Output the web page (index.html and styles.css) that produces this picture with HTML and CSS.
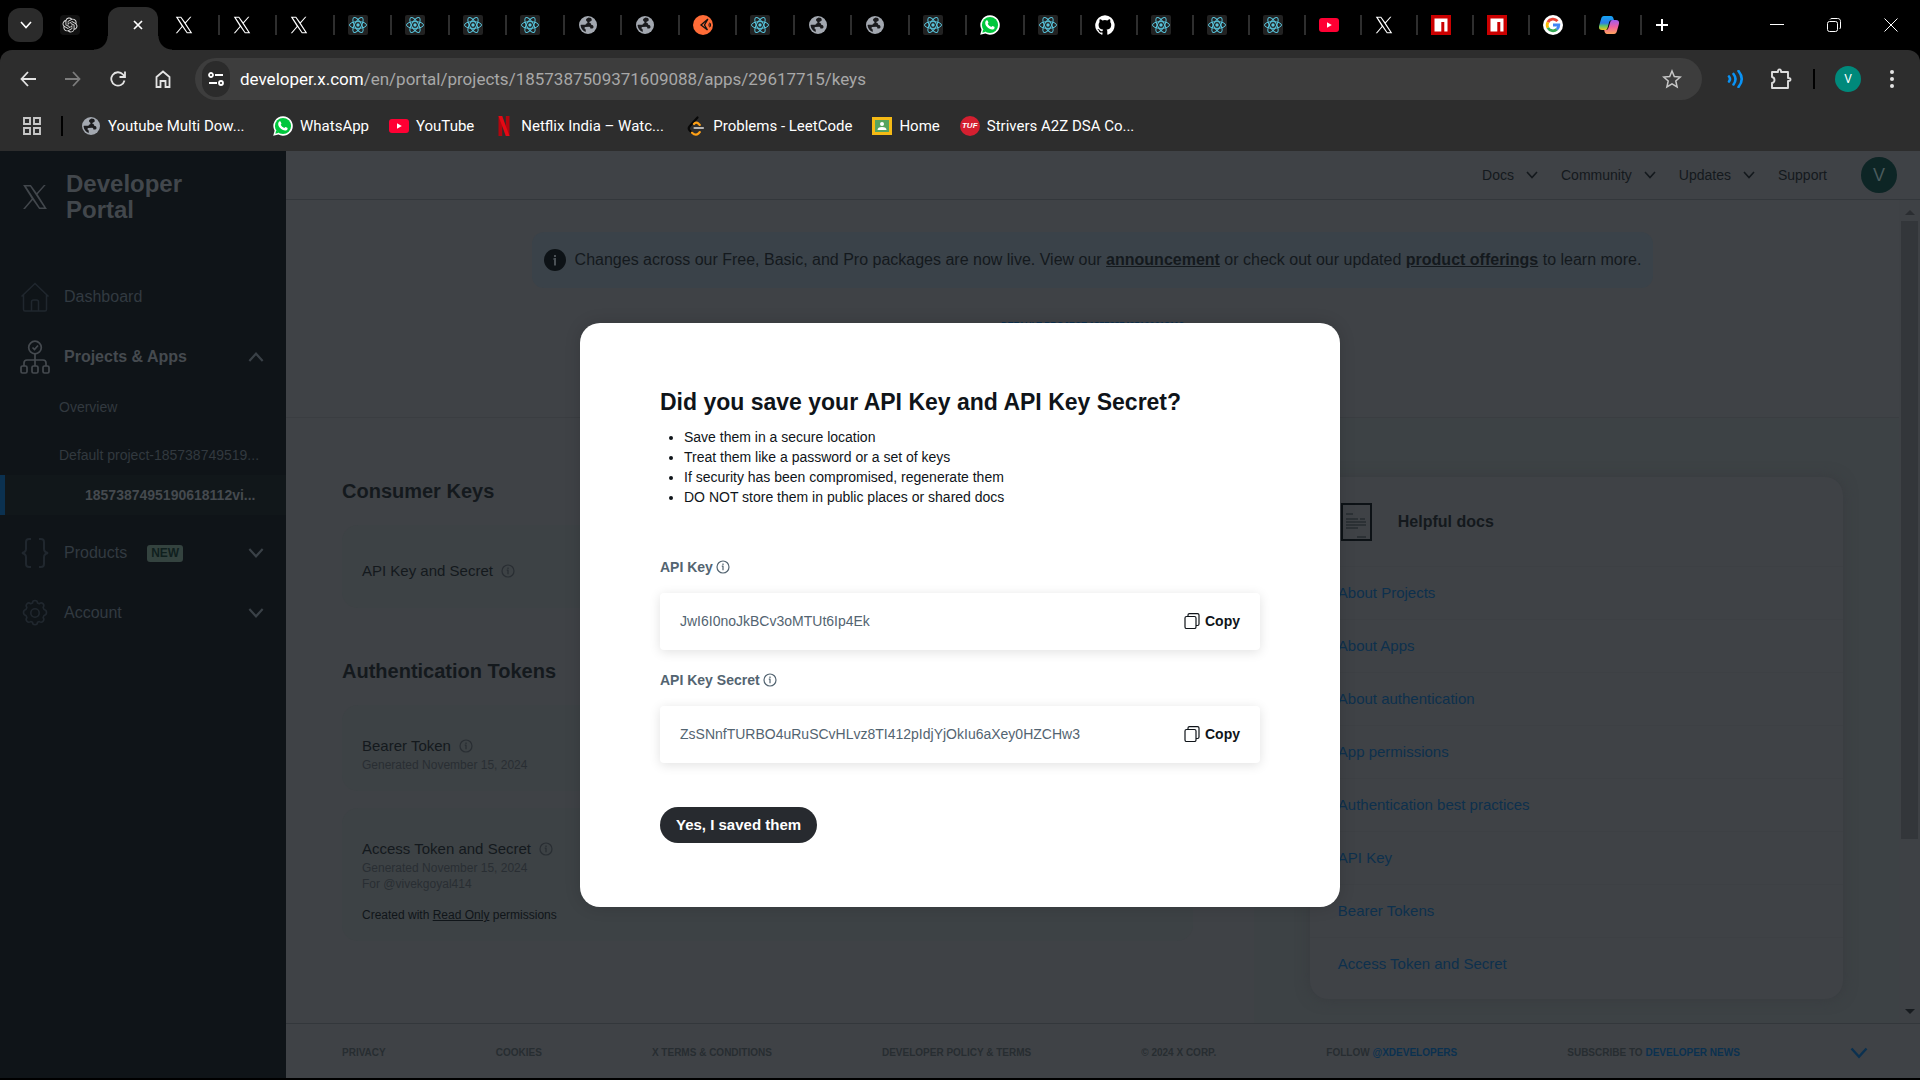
FILE: index.html
```html
<!DOCTYPE html>
<html lang="en">
<head>
<meta charset="utf-8">
<title>Developer Portal</title>
<link rel="stylesheet" href="styles.css">
</head>
<body>
<svg class="sprite" aria-hidden="true">
  <symbol id="x" viewBox="0 0 24 24"><path fill="currentColor" fill-rule="evenodd" d="M1 1h7.2l5.4 7.3L20.200 1h1.700l-7.500 8.500L23 23h-7.200l-5.900-8.200L2.800 23H1l8-9.400zM3.800 2.400 16.500 21.600h3.900L7.500 2.400z"/></symbol>
  <symbol id="react" viewBox="0 0 20 20"><rect width="20" height="20" rx="2" fill="#222"/><circle cx="10" cy="10" r="1.700" fill="#58c4dc"/><g fill="none" stroke="#58c4dc" stroke-width="1"><ellipse cx="10" cy="10" rx="8.500" ry="3.400"/><ellipse cx="10" cy="10" rx="8.500" ry="3.400" transform="rotate(60 10 10)"/><ellipse cx="10" cy="10" rx="8.500" ry="3.400" transform="rotate(120 10 10)"/></g></symbol>
  <symbol id="globe" viewBox="0 0 20 20"><circle cx="10" cy="10" r="9" fill="#a3a8b0"/><path fill="#1b1b1d" d="M10.500 2.500c-1 .8-2.500 1-2.500 2.500s1.500 1.200 1.500 2.500-2 .8-2 2.200H3c-.3 0-.5.4-.4.800.3 3 2.400 5.400 5.100 6.500.1-1.500.3-2.500-.7-3.200-.9-.6-.6-1.500.2-1.900l4-.200c.9 0 1.200.9 1.200 1.800h1.800c1 0 1.300-.8 1.300-1.500 0-1.300-1-2.200-2.300-2.200 0-1.600-1-2-2-2 0-1.700 1.500-1 2.300-2.100.5-.8.200-1.800-.5-2.700z"/></symbol>
  <symbol id="postman" viewBox="0 0 20 20"><circle cx="10" cy="10" r="10" fill="#ff6c37"/><path d="M15 4 8 10l6.500 5M15 4l-3.500 6 3 5" fill="none" stroke="#111" stroke-width="1.300"/><ellipse cx="16.800" cy="10" rx=".8" ry="2" fill="none" stroke="#111"/></symbol>
  <symbol id="whatsapp" viewBox="0 0 20 20"><path d="M10 .3a9.700 9.700 0 0 0-8.400 14.500L.2 19.800l5.200-1.300A9.700 9.700 0 1 0 10 .3z" fill="#fff"/><circle cx="10" cy="10" r="8.100" fill="#00c73c"/><path d="M2.300 17.700l.9-3.400 2.600 2.500z" fill="#00c73c"/><path d="M7 5.300c.4 0 .6.2.8.700l.6 1.500c.2.500-.5 1-.7 1.300.8 1.500 2 2.500 3.500 3.200.5-.3.9-1.200 1.300-1.100l1.800.9c.5.200.4 2-.7 2.500-2 .9-4.800-.5-6.500-2.300C5.400 10.200 4.700 8 5.500 6.400c.3-.6.8-1.100 1.500-1.100z" fill="#fff"/></symbol>
  <symbol id="github" viewBox="0 0 20 20"><path fill="#fff" d="M10 .3a10 10 0 0 0-3.200 19.400c.5.100.7-.2.700-.5v-1.700c-2.800.6-3.400-1.300-3.400-1.300-.4-1.200-1.100-1.500-1.100-1.500-.9-.6.100-.6.100-.6 1 .1 1.500 1 1.500 1 .9 1.600 2.400 1.100 3 .9.100-.7.400-1.100.6-1.400-2.200-.2-4.600-1.100-4.600-4.900 0-1.100.4-2 1-2.700-.1-.2-.4-1.200.1-2.600 0 0 .8-.3 2.700 1a9.500 9.500 0 0 1 5 0c1.900-1.300 2.700-1 2.700-1 .5 1.400.2 2.400.1 2.600.6.700 1 1.600 1 2.700 0 3.800-2.300 4.700-4.600 4.900.4.300.7.900.7 1.900v2.700c0 .3.200.6.700.5A10 10 0 0 0 10 .3z"/></symbol>
  <symbol id="youtube" viewBox="0 0 20 20"><rect y="3" width="20" height="14" rx="3" fill="#ff0033"/><path d="M8 7.200v5.600l4.800-2.800z" fill="#fff"/></symbol>
  <symbol id="npm" viewBox="0 0 20 20"><path fill="#cb0000" d="M0 0h20v20H0z"/><path fill="#fff" d="M3.500 3.500h13v13h-3.200V7h-3v9.500H3.500z"/></symbol>
  <symbol id="google" viewBox="0 0 20 20"><circle cx="10" cy="10" r="10" fill="#fff"/><g fill="none" stroke-width="2.800"><path d="M14.500 6.200A5.900 5.900 0 0 0 4.900 7.200" stroke="#ea4335"/><path d="M4.900 7.200a5.900 5.900 0 0 0 0 5.700" stroke="#fbbc05"/><path d="M4.900 12.900a5.900 5.900 0 0 0 8.900 1.500" stroke="#34a853"/><path d="M13.800 14.400A5.700 5.700 0 0 0 15.800 10H10" stroke="#4285f4"/></g></symbol>
  <symbol id="copilot" viewBox="0 0 20 20"><defs><linearGradient id="ca" x2="0" y2="1"><stop stop-color="#14a5f5"/><stop offset=".5" stop-color="#2c7be5"/><stop offset=".7" stop-color="#5ac46a"/><stop offset="1" stop-color="#f5c518"/></linearGradient><linearGradient id="cb" x2="0" y2="1"><stop stop-color="#a05cf0"/><stop offset=".5" stop-color="#f0609e"/><stop offset="1" stop-color="#ffa45c"/></linearGradient></defs><path fill="url(#ca)" d="M5 1h7c1.500 0 2 1 2.500 2.500l.5 1.800h-2.500c-1.500 0-2 .7-2.400 2L8.500 13c-.5 1.500-1 2-2.500 2H3c-3 0-3.500-2-2.800-4.500l2-7C2.700 2 3.300 1 5 1z"/><path fill="url(#cb)" d="M15 19H8c-1.500 0-2-1-2.500-2.500L5.200 15H7c1.500 0 2-.7 2.400-2l1.800-5.700c.4-1.500 1-2.300 2.500-2.300H17c3 0 3.500 2 2.800 4.500l-2 7C17.300 18 16.700 19 15 19z"/></symbol>
  <symbol id="chev" viewBox="0 0 12 12"><path d="M1 3l5 5.500L11 3" fill="none" stroke="currentColor" stroke-width="1.600"/></symbol>
  <symbol id="info" viewBox="0 0 14 14"><circle cx="7" cy="7" r="6" fill="none" stroke="currentColor" stroke-width="1.200"/><path d="M7 6v4.300M7 3.600V5M5.800 6.200H7.400" stroke="currentColor" stroke-width="1.200"/></symbol>
  <symbol id="copy" viewBox="0 0 16 16"><g fill="none" stroke="currentColor" stroke-width="1.200"><rect x="1" y="3.500" width="11" height="12" rx="1.500"/><path d="M4 3.500V2C4 1 4.600.6 5.500.6h8c.9 0 1.500.5 1.500 1.400v9c0 .9-.6 1.500-1.500 1.500H12"/></g></symbol>
</svg>

<header class="browser">
  <div class="tabstrip">
    <button class="search-tabs" aria-label="Search tabs"><svg width="12" height="12"><use href="#chev"/></svg></button>
    <div class="pinned"><svg width="20" height="20" viewBox="-4 -4 32 32"><rect x="-4" y="-4" width="32" height="32" rx="6" fill="#111"/><path fill="#ddd" d="M22.2819 9.8211a5.9847 5.9847 0 0 0-.5157-4.9108 6.0462 6.0462 0 0 0-6.5098-2.9A6.0651 6.0651 0 0 0 4.9807 4.1818a5.9847 5.9847 0 0 0-3.9977 2.9 6.0462 6.0462 0 0 0 .7427 7.0966 5.98 5.98 0 0 0 .511 4.9107 6.051 6.051 0 0 0 6.5146 2.9001A5.9847 5.9847 0 0 0 13.2599 24a6.0557 6.0557 0 0 0 5.7718-4.2058 5.9894 5.9894 0 0 0 3.9977-2.9001 6.0557 6.0557 0 0 0-.7475-7.0729zm-9.022 12.6081a4.4755 4.4755 0 0 1-2.8764-1.0408l.1419-.0804 4.7783-2.7582a.7948.7948 0 0 0 .3927-.6813v-6.7369l2.02 1.1686a.071.071 0 0 1 .038.052v5.5826a4.504 4.504 0 0 1-4.4945 4.4944zm-9.6607-4.1254a4.4708 4.4708 0 0 1-.5346-3.0137l.142.0852 4.783 2.7582a.7712.7712 0 0 0 .7806 0l5.8428-3.3685v2.3324a.0804.0804 0 0 1-.0332.0615L9.74 19.9502a4.4992 4.4992 0 0 1-6.1408-1.6464zM2.3408 7.8956a4.485 4.485 0 0 1 2.3655-1.9728V11.6a.7664.7664 0 0 0 .3879.6765l5.8144 3.3543-2.0201 1.1685a.0757.0757 0 0 1-.071 0l-4.8303-2.7865A4.504 4.504 0 0 1 2.3408 7.872zm16.5963 3.8558L13.1038 8.364 15.1192 7.2a.0757.0757 0 0 1 .071 0l4.8303 2.7913a4.4944 4.4944 0 0 1-.6765 8.1042v-5.6772a.79.79 0 0 0-.407-.667zm2.0107-3.0231l-.142-.0852-4.7735-2.7818a.7759.7759 0 0 0-.7854 0L9.409 9.2297V6.8974a.0662.0662 0 0 1 .0284-.0615l4.8303-2.7866a4.4992 4.4992 0 0 1 6.6802 4.66zM8.3065 12.863l-2.02-1.1638a.0804.0804 0 0 1-.038-.0567V6.0742a4.4992 4.4992 0 0 1 7.3757-3.4537l-.142.0805L8.704 5.459a.7948.7948 0 0 0-.3927.6813zm1.0976-2.3654l2.602-1.4998 2.6069 1.4998v2.9994l-2.5974 1.4997-2.6067-1.4997Z"/></svg></div>
    <div class="tab-active"><button class="bare" aria-label="Close tab"><svg width="10" height="10" viewBox="0 0 10 10"><path d="M1 1l8 8M9 1L1 9" stroke="#fff" stroke-width="1.700"/></svg></button></div>
    <div class="tabs">
      <span class="tab"><svg class="xi"><use href="#x"/></svg></span>
      <span class="tab"><svg class="xi"><use href="#x"/></svg></span>
      <span class="tab"><svg class="xi"><use href="#x"/></svg></span>
      <span class="tab"><svg><use href="#react"/></svg></span>
      <span class="tab"><svg><use href="#react"/></svg></span>
      <span class="tab"><svg><use href="#react"/></svg></span>
      <span class="tab"><svg><use href="#react"/></svg></span>
      <span class="tab"><svg><use href="#globe"/></svg></span>
      <span class="tab"><svg><use href="#globe"/></svg></span>
      <span class="tab"><svg><use href="#postman"/></svg></span>
      <span class="tab"><svg><use href="#react"/></svg></span>
      <span class="tab"><svg><use href="#globe"/></svg></span>
      <span class="tab"><svg><use href="#globe"/></svg></span>
      <span class="tab"><svg><use href="#react"/></svg></span>
      <span class="tab"><svg><use href="#whatsapp"/></svg></span>
      <span class="tab"><svg><use href="#react"/></svg></span>
      <span class="tab"><svg><use href="#github"/></svg></span>
      <span class="tab"><svg><use href="#react"/></svg></span>
      <span class="tab"><svg><use href="#react"/></svg></span>
      <span class="tab"><svg><use href="#react"/></svg></span>
      <span class="tab"><svg><use href="#youtube"/></svg></span>
      <span class="tab"><svg class="xi"><use href="#x"/></svg></span>
      <span class="tab"><svg><use href="#npm"/></svg></span>
      <span class="tab"><svg><use href="#npm"/></svg></span>
      <span class="tab"><svg><use href="#google"/></svg></span>
      <span class="tab"><svg><use href="#copilot"/></svg></span>
    </div>
    <button class="bare new-tab" aria-label="New tab"><svg width="14" height="14" viewBox="0 0 14 14"><path d="M7 1v12M1 7h12" stroke="#fff" stroke-width="2"/></svg></button>
    <div class="window-controls">
      <button class="bare" aria-label="Minimize"><svg width="14" height="14" viewBox="0 0 14 14"><path d="M0 6.500h14" stroke="#fff"/></svg></button>
      <button class="bare" aria-label="Restore"><svg width="14" height="14" viewBox="0 0 14 14"><g fill="none" stroke="#fff"><rect x=".5" y="3.500" width="10" height="10" rx="2"/><path d="M3 1.500C3.300.8 4 .5 5 .5h5.500c2 0 3 1 3 3V9c0 1-.3 1.700-1 2"/></g></svg></button>
      <button class="bare" aria-label="Close"><svg width="14" height="14" viewBox="0 0 14 14"><path d="M.5.500l13 13M13.500.500l-13 13" stroke="#fff"/></svg></button>
    </div>
  </div>
  <div class="toolbar">
    <button class="bare" aria-label="Back"><svg width="16" height="16" viewBox="0 0 16 16"><path d="M16 8H1.500M8 1L1.500 8 8 15" fill="none" stroke="#e3e3e3" stroke-width="1.800"/></svg></button>
    <button class="bare" aria-label="Forward"><svg width="16" height="16" viewBox="0 0 16 16"><path d="M0 8h14.500M8 1l6.500 7L8 15" fill="none" stroke="#7c7c7c" stroke-width="1.800"/></svg></button>
    <button class="bare" aria-label="Reload"><svg width="16" height="16" viewBox="0 0 16 16"><path d="M14.500 9.500A6.700 6.700 0 1 1 13 3.500l1.500 1.800M15 .5v5.500H9.500" fill="none" stroke="#e3e3e3" stroke-width="1.800"/></svg></button>
    <button class="bare" aria-label="Home"><svg width="16" height="18" viewBox="0 0 16 18"><path d="M1.500 17V7L8 1.500 14.500 7v10h-4v-6h-5v6z" fill="none" stroke="#e3e3e3" stroke-width="1.800"/></svg></button>
    <div class="omnibox">
      <button class="site-info" aria-label="Site information"><svg width="16" height="14" viewBox="0 0 16 14"><g fill="none" stroke="#fff" stroke-width="1.800"><circle cx="3" cy="3" r="2"/><path d="M7 3h8M1 11h8"/><circle cx="13" cy="11" r="2"/></g></svg></button>
      <a class="url" href="#"><span>developer.x.com</span>/en/portal/projects/1857387509371609088/apps/29617715/keys</a>
      <button class="bare" aria-label="Bookmark this tab"><svg width="20" height="20" viewBox="0 0 20 20"><path d="M10 2l2.300 5.500 6 .5-4.500 4 1.300 6-5.100-3.200L4.900 18l1.300-6L1.700 8l6-.5z" fill="none" stroke="#c7c7c7" stroke-width="1.500"/></svg></button>
    </div>
    <button class="bare ext" aria-label="Read aloud"><svg width="18" height="18" viewBox="0 0 18 18"><g fill="none" stroke="#0a93f5" stroke-width="2.600" stroke-linecap="round"><path d="M2 6.500q2 2.500 0 5M6.500 4q4 5 0 10.500M11.500 1q6.500 8 0 16"/></g></svg></button>
    <button class="bare" aria-label="Extensions"><svg width="22" height="22" viewBox="0 0 22 22"><path d="M2 4h6q-.3-2.500 1.500-2.500T11 4h7v6q2.500-.3 2.500 1.500T18 13v7H2v-5q2.500-.5 2.500-3T2 9z" fill="none" stroke="#ddd" stroke-width="1.900" stroke-linejoin="round"/></svg></button>
    <i class="divider"></i>
    <button class="profile" aria-label="Profile">V</button>
    <button class="bare" aria-label="Menu"><svg width="6" height="18" viewBox="0 0 6 18"><g fill="#e3e3e3"><circle cx="3" cy="2" r="2"/><circle cx="3" cy="9" r="2"/><circle cx="3" cy="16" r="2"/></g></svg></button>
  </div>
  <nav class="bookmarks" aria-label="Bookmarks">
    <button class="bare" aria-label="Apps"><svg width="18" height="18" viewBox="0 0 18 18"><path d="M1 1h6v6H1zM11 1h6v6h-6zM1 11h6v6H1zM11 11h6v6h-6z" fill="none" stroke="#c7c7c7" stroke-width="1.900"/></svg></button>
    <i class="divider"></i>
    <a class="bookmark wide" href="#"><svg><use href="#globe"/></svg>Youtube Multi Dow...</a>
    <a class="bookmark" href="#"><svg><use href="#whatsapp"/></svg>WhatsApp</a>
    <a class="bookmark" href="#"><svg><use href="#youtube"/></svg>YouTube</a>
    <a class="bookmark wide" href="#"><svg viewBox="0 0 20 20"><path d="M4.500 0h3.700v20H4.500zM11.800 0h3.700v20h-3.700z" fill="#b1060f"/><path d="M4.500 0h3.700l7.300 20h-3.700z" fill="#e50914"/></svg>Netflix India – Watc...</a>
    <a class="bookmark" href="#"><svg viewBox="0 0 20 20"><g fill="none" stroke-width="2.200" stroke-linecap="round"><path d="M11.500 1.500L3.500 10.500q-1.500 2 0 3.700l2.500 2.500" stroke="#080808"/><path d="M8 8q2-2.500 4.500-.3l1.200 1.200M6 16.700q3.500 3.300 6.300 1l1.500-1.600" stroke="#ffa116"/><path d="M8.500 12h8.500" stroke="#b3b3b3"/></g></svg>Problems - LeetCode</a>
    <a class="bookmark" href="#"><svg viewBox="0 0 20 20"><path fill="#f5ba15" d="M0 1h20v18H0z"/><path fill="#57a45f" d="M3 4h14v12H3z"/><circle cx="10" cy="8" r="2" fill="#fff"/><path fill="#fff" d="M5.500 14q0-3 4.500-3t4.500 3z"/></svg>Home</a>
    <a class="bookmark" href="#"><span class="tuf">TUF</span>Strivers A2Z DSA Co...</a>
  </nav>
</header>

<div class="portal">
  <aside class="sidebar">
    <div class="brand"><svg width="26" height="28"><use href="#x"/></svg><span>Developer<br>Portal</span></div>
    <nav>
      <a class="item" href="#"><svg width="30" height="30" viewBox="0 0 30 30"><g fill="none" stroke="currentColor" stroke-width="1.500"><path d="M1.500 14.500L15 1.500l13.500 13M3.500 12.500v15q0 1.500 1.500 1.500h20q1.500 0 1.500-1.500v-15"/><path d="M11.500 29V20q0-2 2-2h3q2 0 2 2v9"/></g></svg><span>Dashboard</span></a>
      <a class="item open" href="#"><svg width="30" height="34" viewBox="0 0 30 34"><g fill="none" stroke="currentColor" stroke-width="1.700"><circle cx="15" cy="7.500" r="6.300"/><path d="M12.500 7.500l2 2 3.500-4M15 14v12M4 26v-3q0-3 3-3h16q3 0 3 3v3"/><rect x="1" y="26" width="6" height="7" rx="1.500"/><rect x="12" y="26" width="6" height="7" rx="1.500"/><rect x="23" y="26" width="6" height="7" rx="1.500"/></g></svg><span>Projects &amp; Apps</span><svg class="arrow up"><use href="#chev"/></svg></a>
      <a class="sub" href="#">Overview</a>
      <a class="sub project" href="#">Default project-185738749519...</a>
      <a class="sub current" href="#">1857387495190618112vi...</a>
      <a class="item" href="#"><svg width="30" height="30" viewBox="0 0 30 30"><path d="M11 1H9Q6 1 6 4v7q0 3-4 4 4 1 4 4v7q0 3 3 3h2M19 1h2q3 0 3 3v7q0 3 4 4-4 1-4 4v7q0 3-3 3h-2" fill="none" stroke="currentColor" stroke-width="2"/></svg><span>Products</span><b class="new">NEW</b><svg class="arrow"><use href="#chev"/></svg></a>
      <a class="item" href="#"><svg width="30" height="30" viewBox="0 0 30 30"><g fill="none" stroke="currentColor" stroke-width="1.600" stroke-linejoin="round"><circle cx="15" cy="15" r="4.200"/><path d="M12.500 5q0-2.500 2.500-2.500T17.500 5l1.800.8q2-1.700 3.700-.1t.1 3.700l.9 2.100q2.500.5 2.500 3t-2.500 3l-.9 2.100q1.600 2.100-.1 3.800t-3.700.1l-1.800.8q0 2.500-2.500 2.500t-2.500-2.500l-1.800-.8q-2 1.600-3.700-.1t-.1-3.800L6 17.500q-2.500-.5-2.500-3t2.500-3l.9-2.100q-1.600-2 .1-3.700t3.700.1z"/></g></svg><span>Account</span><svg class="arrow"><use href="#chev"/></svg></a>
    </nav>
  </aside>

  <div class="page">
    <header class="topbar">
      <nav>
        <a href="#">Docs<svg><use href="#chev"/></svg></a>
        <a href="#">Community<svg><use href="#chev"/></svg></a>
        <a href="#">Updates<svg><use href="#chev"/></svg></a>
        <a href="#">Support</a>
      </nav>
      <button class="avatar" aria-label="Account">V</button>
    </header>
    <div class="scroller">
      <main>
        <section class="intro">
          <p class="banner"><svg width="22" height="22" viewBox="0 0 22 22"><circle cx="11" cy="11" r="11" fill="#0d1216"/><path d="M11 9v7.500M11 6v2M9.500 10H11" stroke="#4b5156" stroke-width="2"/></svg><span>Changes across our Free, Basic, and Pro packages are now live. View our <a href="#">announcement</a> or check out our updated <a href="#">product offerings</a> to learn more.</span></p>
          <a class="crumb" href="#">DEFAULT PROJECT-1857387495190618112</a>
        </section>
        <div class="columns">
          <section class="keys">
            <h2>Consumer Keys</h2>
            <div class="box single"><h3>API Key and Secret <svg><use href="#info"/></svg></h3></div>
            <h2>Authentication Tokens</h2>
            <div class="box"><h3>Bearer Token <svg><use href="#info"/></svg></h3><p>Generated November 15, 2024</p></div>
            <div class="box"><h3>Access Token and Secret <svg><use href="#info"/></svg></h3><p>Generated November 15, 2024</p><p>For @vivekgoyal414</p><p class="perm">Created with <a href="#">Read Only</a> permissions</p></div>
          </section>
          <aside class="help">
            <div class="card">
              <h2><svg width="31" height="38" viewBox="0 0 31 38"><rect x="1" y="1" width="29" height="36" fill="none" stroke="#0d1216" stroke-width="2"/><path d="M5 11h7M5 16h12M19 16h5M5 19h20M5 22h20M5 25h12M16 34h9" stroke="#272c31" stroke-width="1.300"/></svg>Helpful docs</h2>
              <ul>
                <li><a href="#">About Projects</a></li>
                <li><a href="#">About Apps</a></li>
                <li><a href="#">About authentication</a></li>
                <li><a href="#">App permissions</a></li>
                <li><a href="#">Authentication best practices</a></li>
                <li><a href="#">API Key</a></li>
                <li><a href="#">Bearer Tokens</a></li>
                <li><a href="#">Access Token and Secret</a></li>
              </ul>
            </div>
          </aside>
        </div>
      </main>
      <div class="scrollbar"><i class="up"></i><i class="thumb"></i><i class="down"></i></div>
    </div>
    <footer>
      <a href="#">PRIVACY</a>
      <a href="#">COOKIES</a>
      <a href="#">X TERMS &amp; CONDITIONS</a>
      <a href="#">DEVELOPER POLICY &amp; TERMS</a>
      <span>© 2024 X CORP.</span>
      <span>FOLLOW <a class="blue" href="#">@XDEVELOPERS</a></span>
      <span>SUBSCRIBE TO <a class="blue" href="#">DEVELOPER NEWS</a></span>
      <button class="bare blue" aria-label="Collapse footer"><svg width="18" height="18"><use href="#chev"/></svg></button>
    </footer>
  </div>

  <div class="overlay">
    <div class="modal" role="dialog" aria-labelledby="dlg">
      <h1 id="dlg">Did you save your API Key and API Key Secret?</h1>
      <ul>
        <li>Save them in a secure location</li>
        <li>Treat them like a password or a set of keys</li>
        <li>If security has been compromised, regenerate them</li>
        <li>DO NOT store them in public places or shared docs</li>
      </ul>
      <h2>API Key <svg><use href="#info"/></svg></h2>
      <div class="secret"><span>JwI6I0noJkBCv3oMTUt6Ip4Ek</span><button class="copy"><svg width="16" height="16"><use href="#copy"/></svg>Copy</button></div>
      <h2>API Key Secret <svg><use href="#info"/></svg></h2>
      <div class="secret"><span>ZsSNnfTURBO4uRuSCvHLvz8TI412pIdjYjOkIu6aXey0HZCHw3</span><button class="copy"><svg width="16" height="16"><use href="#copy"/></svg>Copy</button></div>
      <button class="confirm">Yes, I saved them</button>
    </div>
  </div>
</div>
</body>
</html>
```
FILE: styles.css
```css
* { box-sizing: border-box; margin: 0; padding: 0; }
html { background: #000; }
body {
  min-height: 100vh;
  display: flex;
  flex-direction: column;
  padding-bottom: 2px;
  font-family: "Liberation Sans", Arial, sans-serif;
  color: #0f1419;
}
a { color: inherit; text-decoration: none; }
ul { list-style: none; }
svg { display: block; flex: none; }
button { font: inherit; border: 0; cursor: pointer; }
.sprite { position: absolute; width: 0; height: 0; }
.bare { background: none; color: inherit; display: flex; align-items: center; justify-content: center; }

/* Browser window */
.browser { font-family: Roboto, "Open Sans", sans-serif; color: #fff; background: #000; }
.tabstrip { height: 50px; display: flex; align-items: center; background: #000; padding-left: 8px; }
.search-tabs { width: 35px; height: 34px; border-radius: 12px; background: #2b2b2b; color: #fff; display: flex; align-items: center; justify-content: center; }
.pinned { width: 65px; padding-left: 17px; }
.tab-active {
  position: relative;
  align-self: flex-end;
  width: 50px;
  height: 43px;
  padding: 12px 15px 0 0;
  background: #2d2d2d;
  border-radius: 12px 12px 0 0;
  display: flex;
  align-items: flex-start;
  justify-content: flex-end;
}
.tab-active button { height: 12px; }
.tab-active::before, .tab-active::after { content: ""; position: absolute; bottom: 0; width: 14px; height: 14px; }
.tab-active::before { left: -14px; background: radial-gradient(circle at 0 0, #000 13px, #2d2d2d 14px); }
.tab-active::after { right: -14px; background: radial-gradient(circle at 100% 0, #000 13px, #2d2d2d 14px); }
.tabs { display: flex; padding-left: 4px; }
.tab { width: 56px; height: 20px; border-right: 2px solid #2e2e2e; padding-left: 13px; display: flex; align-items: center; }
.tab:nth-child(-n+16) { width: 57px; }
.tab:nth-child(-n+16):nth-child(odd) { width: 58px; }
.tab svg { width: 20px; height: 20px; }
.tab svg.xi { width: 18px; height: 18px; }
.new-tab { margin-left: 13px; }
.window-controls { display: flex; gap: 43px; margin-left: auto; padding-right: 22px; }
.toolbar {
  height: 58px;
  display: flex;
  align-items: center;
  padding: 0 24px 0 20px;
  background: #2d2d2d;
  border-radius: 12px 12px 0 0;
}
.toolbar > .bare { margin-right: 29px; }
.omnibox { flex: 1; height: 42px; border-radius: 21px; background: #3d3d3d; display: flex; align-items: center; padding: 0 20px 0 7px; margin: 0 25px 0 -5px; }
.site-info { width: 28px; height: 36px; border-radius: 18px; background: #2b2b2b; display: flex; align-items: center; justify-content: center; }
.url { flex: 1; padding-left: 10px; font-size: 17px; line-height: 24px; color: #a8a8a8; }
.url span { color: #fff; }
.toolbar .ext { margin-right: 25px; }
.divider { width: 2px; height: 20px; background: #000; }
.toolbar .divider { margin: 0 20px 0 -8px; }
.toolbar .profile { width: 26px; height: 26px; border-radius: 50%; background: #00897b; color: #fff; font-size: 12px; margin-right: 28px; }
.toolbar > .bare:last-child { margin-right: 1px; }
.bookmarks { height: 43px; background: #2d2d2d; display: flex; align-items: center; padding: 0 23px 8px; }
.bookmarks .divider { margin: 0 18px 0 20px; }
.bookmark { display: flex; align-items: center; gap: 7px; margin-right: 20px; font-size: 15px; line-height: 20px; white-space: nowrap; }
.bookmark.wide { width: 172px; }
.bookmark svg { width: 20px; height: 20px; }
.tuf { width: 20px; height: 20px; border-radius: 50%; background: #d41f30; font: italic bold 8px/20px "Liberation Sans", sans-serif; text-align: center; }

/* Portal shell */
.portal { position: relative; flex: 1; display: flex; }
.sidebar { width: 286px; flex: none; background: #0f1418; color: #32393f; }
.brand { display: flex; align-items: center; gap: 18px; padding: 20px 22px 0; color: #42474c; font-size: 24px; font-weight: bold; line-height: 26px; }
.sidebar nav { padding-top: 44px; }
.item { height: 60px; display: flex; align-items: center; padding: 0 22px 0 20px; color: #323a41; font-size: 16px; }
.item > svg:first-child { color: #20272e; }
.item > span { padding-left: 14px; }
.item.open, .item.open > svg:first-child { color: #454a4f; }
.item.open { font-weight: bold; }
.item .arrow { width: 16px; height: 16px; margin-left: auto; color: #3a4147; }
.arrow.up { transform: rotate(180deg); }
.new { margin-left: 20px; padding: 0 4px; border-radius: 3px; background: #34433f; color: #10201e; font-size: 12px; line-height: 17px; }
.sub { display: block; padding: 0 22px 0 59px; font-size: 14px; line-height: 40px; white-space: nowrap; }
.sub.project { margin-top: 8px; }
.sub.current { margin-bottom: 8px; padding-left: 80px; border-left: 5px solid #0b3150; background: #11171a; color: #454a4f; font-weight: bold; }

.page { flex: 1; min-width: 0; display: flex; flex-direction: column; background: #3f4246; color: #14191d; }
.topbar { height: 49px; display: flex; align-items: center; justify-content: flex-end; gap: 34px; padding-right: 23px; border-bottom: 1px solid #33373b; }
.topbar nav { display: flex; gap: 23px; font-size: 14px; }
.topbar nav a { display: flex; align-items: center; gap: 12px; }
.topbar nav svg { width: 12px; height: 12px; }
.avatar { width: 36px; height: 36px; border-radius: 50%; background: #0d2525; color: #4a5a5c; font-size: 18px; }
.scroller { flex: 1; display: flex; }
main { flex: 1; min-width: 0; display: flex; flex-direction: column; }
.intro { height: 218px; padding-top: 32px; display: flex; flex-direction: column; align-items: center; border-bottom: 1px solid #3a3d41; }
.banner { min-height: 56px; display: flex; align-items: center; gap: 9px; padding: 0 12px; border-radius: 12px; background: #3a4249; font-size: 16px; line-height: 20px; }
.banner a { font-weight: bold; text-decoration: underline; }
.crumb { margin-top: 31px; font-size: 9px; line-height: 12px; font-weight: bold; color: #0b3150; }
.columns { flex: 1; display: grid; grid-template-columns: 3fr 2fr; }
.keys { padding: 61px 61px 56px 56px; }
.keys h2 { margin-bottom: 22px; font-size: 20px; line-height: 24px; }
.box { margin-bottom: 17px; padding: 30px 20px 18px; border-radius: 16px; background: #3d4245; font-size: 12px; line-height: 16px; color: #292e33; }
.box.single { margin-bottom: 51px; padding: 35px 20px 26px; }
.box h3 { display: flex; align-items: center; gap: 8px; font-size: 15px; line-height: 22px; font-weight: normal; color: #14191d; }
.box h3 svg { width: 14px; height: 14px; color: #292e33; }
.box .perm { margin-top: 15px; color: #101519; }
.perm a { text-decoration: underline; }
.help { padding: 59px 56px 24px; background: #3d4245; }
.card { padding-bottom: 9px; border-radius: 18px; background: #3f4246; box-shadow: 0 0 14px #383b3f; }
.card h2 { height: 89px; display: flex; align-items: center; gap: 26px; padding-left: 31px; font-size: 16px; }
.card li { height: 53px; padding-left: 28px; border-top: 1px solid #3d4044; font-size: 15px; line-height: 52px; color: #0d304d; }
.scrollbar { width: 21px; display: flex; flex-direction: column; align-items: center; background: #3e4145; }
.scrollbar .thumb { flex: 1; width: 17px; margin: 6px 0 170px; background: #33363a; }
.scrollbar .up { margin-top: 10px; border: 5px solid transparent; border-top: 0; border-bottom-color: #2a2d31; }
.scrollbar .down { margin-bottom: 9px; border: 5px solid transparent; border-bottom: 0; border-top-color: #171b1f; }
footer { height: 55px; display: flex; align-items: center; justify-content: space-between; padding: 4px 52px 0 56px; border-top: 1px solid #33373b; font-size: 10px; line-height: 12px; font-weight: bold; color: #272d31; }
.blue { color: #0b3150; }

/* Dialog */
.overlay { position: absolute; inset: 0; display: flex; align-items: center; justify-content: center; }
.modal { width: 760px; max-width: 100%; padding: 64px 80px; border-radius: 20px; background: #fff; box-shadow: 0 0 16px rgba(0, 0, 0, .15); }
.modal h1 { margin-bottom: 10px; font-size: 23px; line-height: 30px; }
.modal ul { margin-bottom: 50px; padding-left: 24px; list-style: disc; font-size: 14px; line-height: 20px; }
.modal h2 { display: flex; align-items: center; gap: 3px; margin-bottom: 16px; font-size: 14px; line-height: 20px; color: #536471; }
.modal h2 svg { width: 14px; height: 14px; }
.secret { height: 57px; display: flex; align-items: center; justify-content: space-between; margin-bottom: 20px; padding: 0 20px; border-radius: 4px; box-shadow: 0 2px 12px rgba(0, 0, 0, .12); font-size: 14px; color: #536471; }
.copy { display: flex; align-items: center; gap: 5px; background: none; color: #0f1419; font-weight: bold; }
.confirm { height: 36px; margin-top: 44px; padding: 0 16px; border-radius: 18px; background: #272a2f; color: #fff; font-size: 15px; font-weight: bold; display: block; }
```
